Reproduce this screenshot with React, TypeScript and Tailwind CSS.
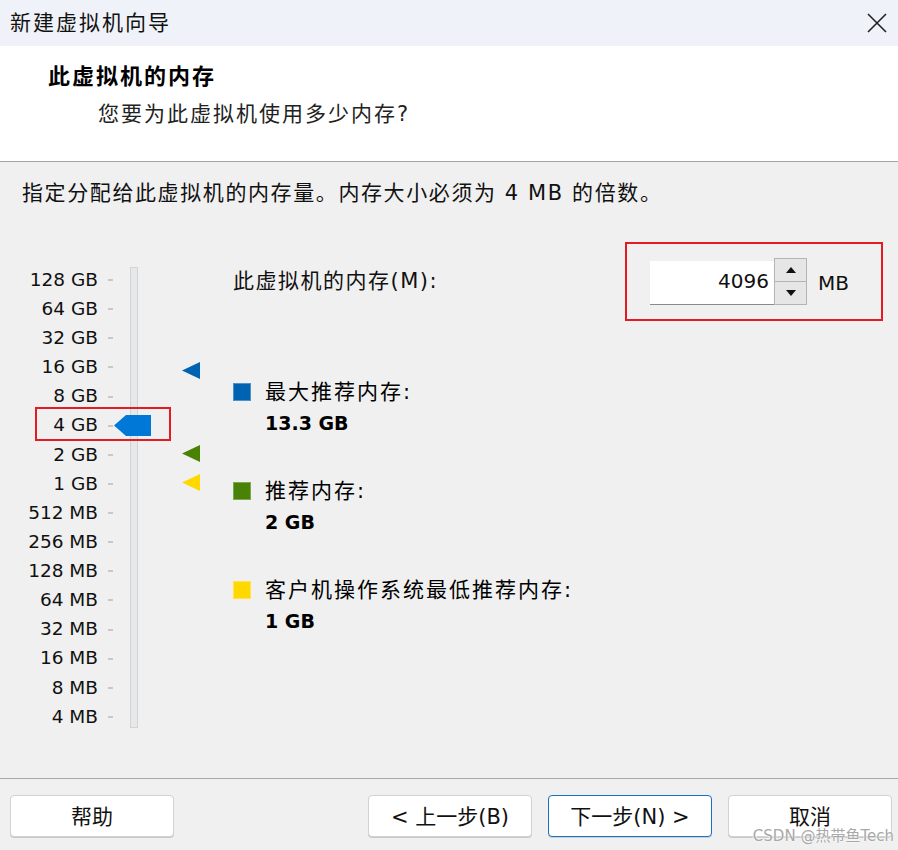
import React from "react";

const scale = [
  "128 GB", "64 GB", "32 GB", "16 GB", "8 GB", "4 GB", "2 GB", "1 GB",
  "512 MB", "256 MB", "128 MB", "64 MB", "32 MB", "16 MB", "8 MB", "4 MB",
];

function Tri({ color, top }: { color: string; top: number }) {
  return (
    <svg
      className="absolute left-[162px]"
      style={{ top }}
      width="18"
      height="17"
      viewBox="0 0 18 17"
    >
      <path d="M18 0 V17 L0 8.5 Z" fill={color} />
    </svg>
  );
}

function Legend({ color, label, value }: { color: string; label: string; value: string }) {
  return (
    <div className="flex items-start">
      <div className="mt-[6px] w-[18px] h-[18px] shrink-0 border border-white/30" style={{ backgroundColor: color }} />
      <div className="ml-[14px] flex flex-col">
        <div className="h-[31px] leading-[31px] text-[21px] tracking-[2px] text-black">{label}</div>
        <div className="h-[31px] leading-[31px] text-[19px] font-bold text-black">{value}</div>
      </div>
    </div>
  );
}

function Btn({ children, primary }: { children: React.ReactNode; primary?: boolean }) {
  return (
    <button
      className={
        "h-[42px] w-[164px] rounded-[4px] bg-white text-[21px] text-[#111] flex items-center justify-center pt-[4px] " +
        (primary ? "border border-[#1a6fc8] shadow-[0_1px_0_#d0d0d0]" : "border border-[#d2d2d2] shadow-[0_1px_0_#c8c8c8]")
      }
    >
      {children}
    </button>
  );
}

export default function App() {
  return (
    <div
      className="relative w-[898px] h-[850px] overflow-hidden bg-[#f0f0f0] text-black"
      style={{ fontFamily: '"DejaVu Sans", "Noto Sans CJK SC", sans-serif' }}
    >
      {/* Title bar */}
      <div className="h-[46px] bg-[#eff2f8] flex items-center justify-between pl-[10px] pr-[10px]">
        <div className="text-[21px] tracking-[2px] text-[#111] leading-none">新建虚拟机向导</div>
        <svg width="20" height="20" viewBox="0 0 20 20" className="mr-[1px]">
          <path d="M1 1 L19 19 M19 1 L1 19" stroke="#222" strokeWidth="1.6" fill="none" />
        </svg>
      </div>

      {/* Header */}
      <div className="h-[116px] bg-white border-b border-[#a3a3a3] flex flex-col">
        <div className="pl-[48px] mt-[15px] h-[31px] leading-[31px] text-[22px] tracking-[2px] font-bold">此虚拟机的内存</div>
        <div className="pl-[98px] mt-[7px] h-[31px] leading-[31px] text-[21px] tracking-[2px] text-[#222]">您要为此虚拟机使用多少内存?</div>
      </div>

      {/* Body */}
      <div className="h-[617px] border-b border-[#a8a8a8] pt-[16px]">
        <div className="pl-[22px] h-[30px] leading-[30px] text-[21px] tracking-[1.6px] text-[#111]">
          指定分配给此虚拟机的内存量。内存大小必须为 4 MB 的倍数。
        </div>

        <div className="flex pt-[34px]">
          {/* Slider */}
          <div className="relative ml-[20px] w-[180px] mt-[23.5px] shrink-0">
            <div className="absolute left-[110px] top-[1.5px] w-[8px] h-[461px] bg-[#e6e8e9] border border-[#d3d3d3]" />
            <div className="flex flex-col">
              {scale.map((s) => (
                <div key={s} className="h-[29.13px] flex items-center">
                  <div className="w-[78px] text-right text-[18.5px] leading-none text-[#111]">{s}</div>
                  <div className="ml-[10px] w-[5px] h-[2px] bg-[#c8c8c8]" />
                </div>
              ))}
            </div>
            <svg className="absolute left-[94px] top-[149px]" width="37" height="21" viewBox="0 0 37 21">
              <path d="M0 10.5 L12 0 H37 V21 H12 Z" fill="#0078d7" />
            </svg>
            <Tri color="#0063b1" top={96} />
            <Tri color="#498205" top={179} />
            <Tri color="#ffd800" top={208} />
            <div className="absolute left-[15px] top-[141px] w-[136px] h-[34px] border-2 border-[#e31b23]" />
          </div>

          {/* Right column */}
          <div className="flex-1 ml-[33px] pr-[15px] flex flex-col">
            <div className="flex items-center justify-between h-[79px]">
              <div className="text-[21px] tracking-[1.5px] text-[#111]">此虚拟机的内存(M):</div>
              <div className="w-[258px] h-[79px] border-2 border-[#e31b23] flex items-center pl-[23px]">
                <div className="flex items-center mt-[2px]">
                  <div className="w-[124px] h-[44px] bg-white border-b border-[#8a8a8a] flex items-center justify-end pr-[5px] pb-[3px] text-[20px] text-[#111]">
                    4096
                  </div>
                  <div className="w-[33px] h-[47px] border border-[#b4b4b4] bg-[#e6e6e6] flex flex-col -mt-[2px]">
                    <div className="flex-1 border-b border-[#b4b4b4] flex items-center justify-center">
                      <svg width="10" height="6" viewBox="0 0 10 6"><path d="M0 6 L5 0 L10 6 Z" fill="#111" /></svg>
                    </div>
                    <div className="flex-1 flex items-center justify-center">
                      <svg width="10" height="6" viewBox="0 0 10 6"><path d="M0 0 L10 0 L5 6 Z" fill="#111" /></svg>
                    </div>
                  </div>
                  <div className="ml-[11px] text-[20px] text-[#111]">MB</div>
                </div>
              </div>
            </div>
            <div className="flex flex-col gap-[37px] mt-[56px]">
              <Legend color="#0063b1" label="最大推荐内存:" value="13.3 GB" />
              <Legend color="#498205" label="推荐内存:" value="2 GB" />
              <Legend color="#ffd800" label="客户机操作系统最低推荐内存:" value="1 GB" />
            </div>
          </div>
        </div>
      </div>

      {/* Footer */}
      <div className="flex items-start pt-[16px] pl-[10px] pr-[6px]">
        <Btn>帮助</Btn>
        <div className="flex-1" />
        <div className="flex gap-[16px]">
          <Btn>&lt; 上一步(B)</Btn>
          <Btn primary>下一步(N) &gt;</Btn>
          <Btn>取消</Btn>
        </div>
      </div>

      {/* Watermark */}
      <div
        className="absolute right-[4px] bottom-[6px] text-[15px] text-[#a8a8a8] leading-none"
        style={{ textShadow: "0 0 2px #fff, 0 0 2px #fff" }}
      >
        CSDN @热带鱼Tech
      </div>
    </div>
  );
}
